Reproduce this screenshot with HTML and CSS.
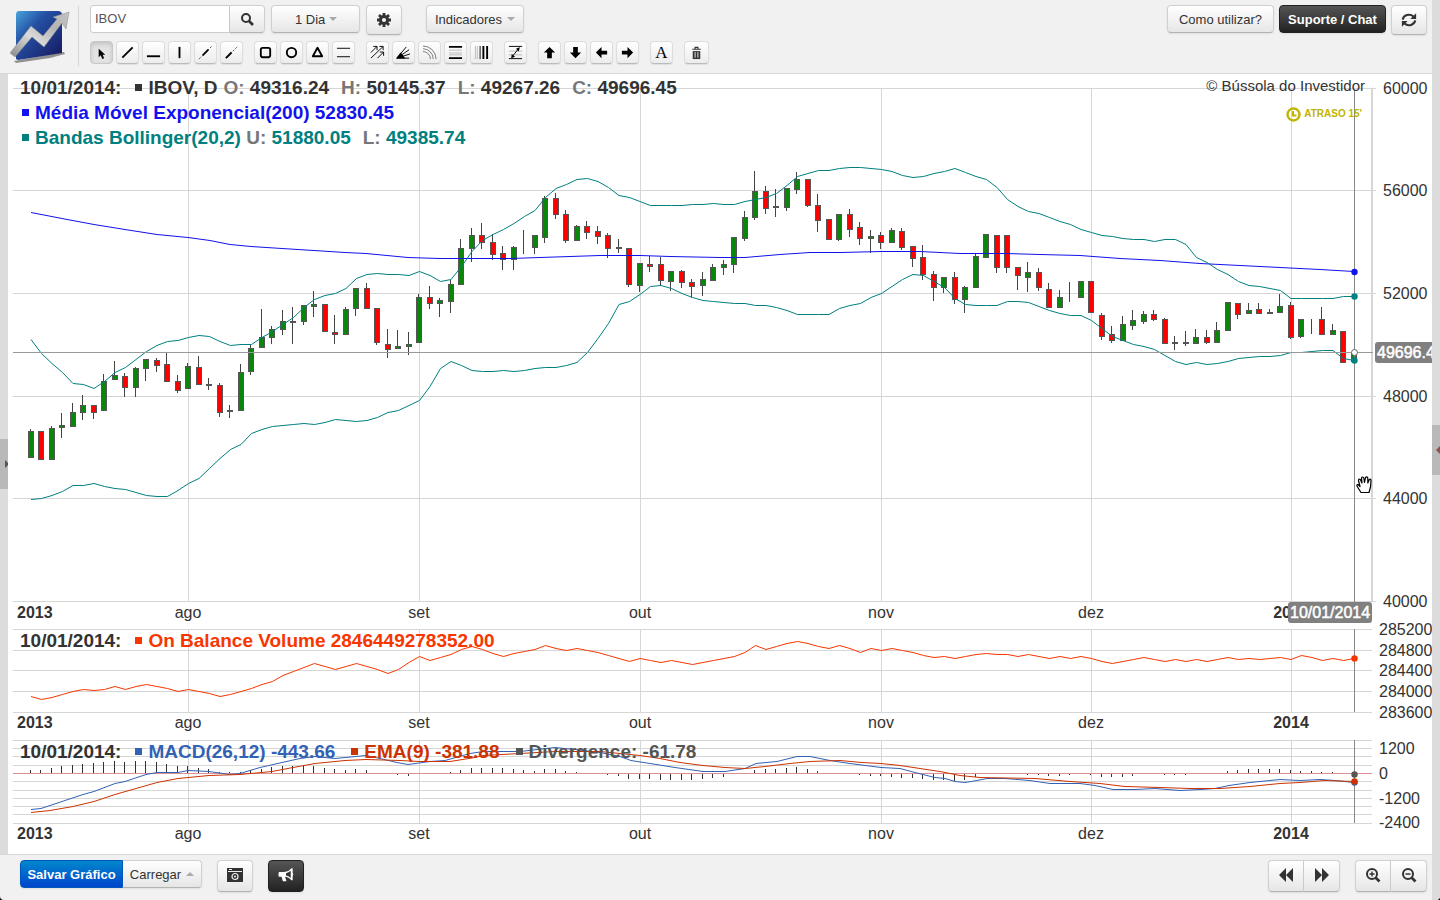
FILE: index.html
```html
<!DOCTYPE html>
<html lang="pt-BR">
<head>
  <meta charset="UTF-8">
  <meta name="viewport" content="width=device-width, initial-scale=1.0">
  <title>IBOV - Bússola do Investidor</title>
  <link rel="stylesheet" href="styles.css">
</head>
<body>
  <div class="main">
    <header class="topbar">
      <a href="#" class="logo" aria-label="Bússola do Investidor">
        <svg width="60" height="54" viewBox="0 0 60 54">
          <defs>
            <linearGradient id="logoBlue" x1="0" y1="0" x2="1" y2="1">
              <stop offset="0" stop-color="#4aa3dc"/>
              <stop offset="0.35" stop-color="#2450a4"/>
              <stop offset="1" stop-color="#16165c"/>
            </linearGradient>
            <linearGradient id="logoGrey" x1="0" y1="1" x2="1" y2="0">
              <stop offset="0" stop-color="#888"/>
              <stop offset="0.4" stop-color="#dadada"/>
              <stop offset="0.7" stop-color="#b4b4b4"/>
              <stop offset="1" stop-color="#c4c4c4"/>
            </linearGradient>
          </defs>
          <path d="M4 52 54 43 55 45 40 49 6 54z" fill="#777" opacity=".8"/>
          <path d="M9 2h39q4 0 4 4v38L8 51 6 50V6q0-4 3-4z" fill="url(#logoBlue)"/>
          <path d="M0 44 21 17 33 27 47 10 43 8 59 3 56 20 52 14 34 38 22 28 5 48z" fill="url(#logoGrey)" stroke="#8a8a8a" stroke-width=".5"/>
        </svg>
      </a>
      <div class="controls">
        <div class="row">
          <div class="search">
            <input type="text" value="IBOV" aria-label="Ativo">
            <button class="btn" aria-label="Buscar">
              <svg width="14" height="14" viewBox="0 0 14 14"><circle cx="6" cy="6" r="4" fill="none" stroke="#333" stroke-width="2"/><path d="M9 9l4 4" stroke="#333" stroke-width="2.6"/></svg>
            </button>
          </div>
          <div class="period">
            <select class="btn" aria-label="Período"><option>1 Dia</option></select>
            <i class="caret"></i>
          </div>
          <button class="btn tall" aria-label="Configurar">
            <svg width="14" height="14" viewBox="0 0 14 14"><circle cx="7" cy="7" r="3.6" fill="none" stroke="#333" stroke-width="3"/><path d="M7 0v3M7 11v3M0 7h3M11 7h3M2 2l2 2M10 10l2 2M12 2l-2 2M4 10l-2 2" stroke="#333" stroke-width="2.8"/></svg>
          </button>
          <button class="btn indicators">Indicadores <i class="caret"></i></button>
        </div>
        <div class="row tools">
          <div class="group">
            <button class="tool active" aria-label="Selecionar"><svg viewBox="0 0 16 16"><path d="M5 4v9l2.200-2 1.600 4 2-1-1.600-3.600H12z"/></svg></button>
            <button class="tool" aria-label="Linha"><svg viewBox="0 0 16 16"><path d="M2.500 13.500 13.500 2.500" class="s2"/></svg></button>
            <button class="tool" aria-label="Linha horizontal"><svg viewBox="0 0 16 16"><path d="M1 12h14" class="s2"/></svg></button>
            <button class="tool" aria-label="Linha vertical"><svg viewBox="0 0 16 16"><path d="M8 2v12" class="s2"/></svg></button>
            <button class="tool" aria-label="Reta estendida"><svg viewBox="0 0 16 16"><path d="M5 11l6-6" class="s2"/><path d="M1 15l4-4M11 5l4-4" class="s1 dots"/></svg></button>
            <button class="tool" aria-label="Semirreta"><svg viewBox="0 0 16 16"><path d="M2 14l6-6" class="s2"/><path d="M8 8l6-6" class="s1 dots"/></svg></button>
          </div>
          <div class="group">
            <button class="tool" aria-label="Retângulo"><svg viewBox="0 0 16 16"><rect x="3" y="3" width="10" height="10" rx="2" class="s2"/></svg></button>
            <button class="tool" aria-label="Círculo"><svg viewBox="0 0 16 16"><circle cx="8" cy="8" r="5" class="s2"/></svg></button>
            <button class="tool" aria-label="Triângulo"><svg viewBox="0 0 16 16"><path d="M8 3 13 12H3z" class="s2" stroke-linejoin="round"/></svg></button>
            <button class="tool" aria-label="Canal"><svg viewBox="0 0 16 16"><path d="M1 3.500h14M1 12.500h14" class="s1"/></svg></button>
          </div>
          <div class="group">
            <button class="tool" aria-label="Canal de tendência"><svg viewBox="0 0 16 16"><path d="M1 8l6-6M3.500 1.500h4v4M1 14 14 1.500M10 1.500h4v4M8 14l6-6M10.500 7.500h4v4" class="s1"/></svg></button>
            <button class="tool" aria-label="Leque"><svg viewBox="0 0 16 16"><path d="M1 14 11 2M1 14 14 5M1 14 15 9.500M1 14h13" class="s1"/><path d="M0 14.500 5 8l5 6.500z"/></svg></button>
            <button class="tool" aria-label="Arcos"><svg viewBox="0 0 16 16"><path d="M1 1a14 14 0 0 1 14 14M1 4a11 11 0 0 1 11 11M1 7a8 8 0 0 1 8 8" class="s1 grey"/></svg></button>
            <button class="tool" aria-label="Fibonacci"><svg viewBox="0 0 16 16"><path d="M1 2h14M1 14h14" class="s2"/><path d="M1 5.500h14M1 8.500h14M1 10.500h14" class="s1 light"/></svg></button>
            <button class="tool" aria-label="Zonas de tempo"><svg viewBox="0 0 16 16"><path d="M1.500 1v14M3.500 1v14" class="s1 light"/><path d="M6.500 1v14" class="s1"/><path d="M10 1v14M14 1v14" class="s2"/></svg></button>
          </div>
          <div class="group">
            <button class="tool" aria-label="Projeção"><svg viewBox="0 0 16 16"><path d="M1 1.500h14M1 14.500h14" class="s1"/><path d="M1 6.500h14M1 10.500h14" class="s1 light"/><path d="M4 13 12 3" class="s1"/><path d="M8.500 4 12.500 2.500l-1 4.500zM4 9.500l-.5 4.500 4-1.500z"/></svg></button>
          </div>
          <div class="group">
            <button class="tool" aria-label="Seta para cima"><svg viewBox="0 0 16 16"><path d="M8 2l6 6h-3.500v6h-5V8H2z"/></svg></button>
            <button class="tool" aria-label="Seta para baixo"><svg viewBox="0 0 16 16"><path d="M8 14l6-6h-3.500V2h-5v6H2z"/></svg></button>
            <button class="tool" aria-label="Seta para esquerda"><svg viewBox="0 0 16 16"><path d="M2 8l6-6v4h6v4H8v4z"/></svg></button>
            <button class="tool" aria-label="Seta para direita"><svg viewBox="0 0 16 16"><path d="M14 8 8 2v4H2v4h6v4z"/></svg></button>
          </div>
          <div class="group">
            <button class="tool letter">A</button>
          </div>
          <div class="group">
            <button class="tool trash" aria-label="Apagar"><svg viewBox="0 0 16 16"><path d="M6.500 4V2.500h3V4M3.500 4.500h9" fill="none" stroke="#333" stroke-width="1.200"/><path d="M4 6.500h8V15H4z" fill="#333"/><path d="M6.500 7.500v6M9.500 7.500v6" stroke="#eee"/></svg></button>
          </div>
        </div>
      </div>
      <div class="row help">
        <button class="btn wide">Como utilizar?</button>
        <button class="btn wide dark">Suporte / Chat</button>
        <button class="btn tall" aria-label="Atualizar">
          <svg width="18" height="16" viewBox="0 0 18 16"><path d="M2 7.500a7 6 0 0 1 12-3.500M16 8.500A7 6 0 0 1 4 12" fill="none" stroke="#333" stroke-width="2.400"/><path d="M17 .5v6.500h-6.500zM1 15.500V9h6.500z" fill="#333"/></svg>
        </button>
      </div>
    </header>

    <div class="work">
      <div class="strip"><button class="handle" aria-label="Abrir painel"><i class="right"></i></button></div>
      <main class="charts">
        <section class="pane">
          <svg class="plot" id="price" viewBox="8 74 1424 550"></svg>
          <div class="legend">
            <div class="line">
              <span class="date">10/01/2014:</span><i class="dot"></i><span>IBOV, D</span>
              <span><em>O:</em> 49316.24</span><span class="next"><em>H:</em> 50145.37</span><span class="next"><em>L:</em> 49267.26</span><span class="next"><em>C:</em> 49696.45</span>
            </div>
            <div class="line blue"><i class="dot"></i><span>Média Móvel Exponencial(200) 52830.45</span></div>
            <div class="line teal"><i class="dot"></i><span>Bandas Bollinger(20,2) <em>U:</em> 51880.05</span><span class="next"><em>L:</em> 49385.74</span></div>
          </div>
          <div class="credits">
            <p>© Bússola do Investidor</p>
            <p class="delay"><svg width="15" height="15" viewBox="0 0 15 15"><circle cx="7.500" cy="7.500" r="6" fill="none" stroke="#c1b400" stroke-width="2.400"/><path d="M7 4v4.500h3.500" fill="none" stroke="#c1b400" stroke-width="2"/></svg>ATRASO 15'</p>
          </div>
          <svg class="hand" width="18" height="20" viewBox="0 0 18 20"><path d="M5 17.500 1.500 12Q0 9.500 2 9.500l2 2L2.500 5.500Q2.500 3.500 4.300 4.500L6 8 5.500 3Q6.500 1 7.800 3L8.500 7.500 9.500 2.500Q11 1 11.800 3V8L13.300 4.500Q15 3.500 15 5.500L14.500 12 13 17.500z" fill="#fff" stroke="#000" stroke-width="1.200" stroke-linejoin="round"/></svg>
        </section>
        <section class="pane">
          <svg class="plot" id="obv" viewBox="8 624 1424 111"></svg>
          <div class="legend low">
            <div class="line"><span class="date">10/01/2014:</span><span class="item orange"><i class="dot"></i>On Balance Volume 2846449278352.00</span></div>
          </div>
        </section>
        <section class="pane">
          <svg class="plot" id="macd" viewBox="8 735 1424 119"></svg>
          <div class="legend low">
            <div class="line"><span class="date">10/01/2014:</span><span class="item steel"><i class="dot"></i>MACD(26,12) -443.66</span><span class="item next red"><i class="dot"></i>EMA(9) -381.88</span><span class="item next grey"><i class="dot"></i>Divergence: -61.78</span></div>
          </div>
        </section>
      </main>
    </div>

    <footer class="bottombar">
      <div class="joined">
        <button class="btn primary">Salvar Gráfico</button>
        <button class="btn load">Carregar <i class="caret up"></i></button>
      </div>
      <button class="btn big camera" aria-label="Imagem">
        <svg width="16" height="14" viewBox="0 0 16 14"><path d="M0 0h16v14H0z" fill="#333"/><path d="M1 3.500h14M2 1.500h3" stroke="#eee"/><circle cx="8" cy="8.500" r="3" fill="none" stroke="#eee" stroke-width="1.200"/><circle cx="8" cy="8.500" r="1" fill="#eee"/></svg>
      </button>
      <button class="btn big dark" aria-label="Anunciar">
        <svg width="18" height="16" viewBox="0 0 18 16"><path d="M1 4.500h6q5 0 8-4h1.500V6q1.500 1 0 3v5H15q-3-4-7-4l1.500 5H5.500L4 10H1q-1-2.500 0-5.500z" fill="#fff"/><path d="M9 6Q12 5.500 14.300 3.300v8Q12 9 9 8.700z" fill="#333"/></svg>
      </button>
      <div class="joined nav">
        <button class="btn big" aria-label="Voltar"><svg width="16" height="14" viewBox="0 0 16 14"><path d="M8 0v14L1 7zM15 0v14L8 7z" fill="#333"/></svg></button>
        <button class="btn big" aria-label="Avançar"><svg width="16" height="14" viewBox="0 0 16 14"><path d="M1 0v14l7-7zM8 0v14l7-7z" fill="#333"/></svg></button>
      </div>
      <div class="joined">
        <button class="btn big" aria-label="Aproximar"><svg width="16" height="16" viewBox="0 0 16 16"><circle cx="7" cy="7" r="5" fill="none" stroke="#333" stroke-width="2"/><path d="M10.500 10.500l4 4" stroke="#333" stroke-width="2.600"/><path d="M4.500 7h5M7 4.500v5" stroke="#333" stroke-width="1.400"/></svg></button>
        <button class="btn big" aria-label="Afastar"><svg width="16" height="16" viewBox="0 0 16 16"><circle cx="7" cy="7" r="5" fill="none" stroke="#333" stroke-width="2"/><path d="M10.500 10.500l4 4" stroke="#333" stroke-width="2.600"/><path d="M4.500 7h5" stroke="#333" stroke-width="1.400"/></svg></button>
      </div>
    </footer>
  </div>
  <div class="strip"><button class="handle" aria-label="Abrir painel"><i class="left"></i></button></div>

  <script src="chart.js"></script>
</body>
</html>
```

FILE: styles.css
```css
* {
  box-sizing: border-box;
}
html {
  background: #000;
}
body {
  margin: 0;
  display: flex;
  min-height: 100vh;
  font-family: "Liberation Sans", Arial, sans-serif;
  font-size: 13px;
  color: #333;
  background: #f1f1f1;
  border-radius: 0 0 4px 4px;
  overflow: hidden;
}
button, input, select {
  font: inherit;
  color: inherit;
  margin: 0;
}
.main {
  flex: 1;
  min-width: 0;
  display: flex;
  flex-direction: column;
}

/* Top toolbar */
.topbar {
  display: flex;
  height: 74px;
  border-bottom: 1px solid #d9d9d9;
}
.logo {
  width: 79px;
  height: 60px;
  margin: 6px 11px 0 0;
  padding: 3px 0 0 10px;
  border-right: 1px solid #d5d5d5;
}
.logo svg {
  display: block;
}
.controls {
  flex: 1;
}
.row {
  display: flex;
  align-items: flex-start;
}
.controls .row:first-child {
  height: 36px;
  padding-top: 5px;
  gap: 6px;
}
.btn {
  display: inline-flex;
  align-items: center;
  justify-content: center;
  height: 28px;
  padding: 0 9px;
  border: 1px solid #d0d0d0;
  border-bottom-color: #b3b3b3;
  border-radius: 4px;
  background: linear-gradient(#fff, #e6e6e6);
  box-shadow: 0 1px 2px rgba(0,0,0,0.08);
  white-space: nowrap;
  cursor: pointer;
}
.btn:hover {
  background: #e6e6e6;
}
.btn.wide {
  width: 107px;
  padding: 0;
}
.btn.tall {
  width: 36px;
  height: 30px;
}
.btn.dark {
  color: #fff;
  font-weight: bold;
  border-color: #222;
  background: linear-gradient(#555, #222);
}
.btn.primary {
  color: #fff;
  font-weight: bold;
  border-color: #05b;
  background: linear-gradient(#08c, #04c);
}
.caret {
  border: 4px solid transparent;
  border-top-color: #aaa;
  border-bottom: 0;
  margin-left: 5px;
}
.caret.up {
  border-bottom: 4px solid #aaa;
  border-top: 0;
}
.search {
  display: flex;
}
.search input {
  width: 140px;
  height: 28px;
  padding: 0 4px 2px;
  border: 1px solid #ccc;
  border-radius: 3px 0 0 3px;
  background: #fff;
  color: #555;
}
.search .btn {
  width: 35px;
  border-left: 0;
  border-radius: 0 4px 4px 0;
}
.period {
  position: relative;
  width: 89px;
}
.period select {
  appearance: none;
  width: 100%;
  padding: 0 23px;
}
.period .caret {
  position: absolute;
  right: 23px;
  top: 12px;
  pointer-events: none;
}
.indicators {
  width: 98px;
  margin-left: 18px;
}
.help {
  gap: 5px;
  padding: 5px 5px 0 0;
}

/* Drawing tools */
.tools {
  padding-top: 5px;
  gap: 11px;
}
.group {
  display: flex;
  gap: 3px;
}
.tool {
  display: flex;
  align-items: center;
  justify-content: center;
  width: 23px;
  height: 23px;
  padding: 0;
  border: 1px solid #ddd;
  border-bottom-color: #bbb;
  border-radius: 4px;
  background: linear-gradient(#fff, #ececec);
  box-shadow: 0 1px 1px rgba(0,0,0,0.08);
}
.tool svg {
  width: 15px;
  height: 15px;
}
.tool.active {
  background: #e3e3e3;
  border-color: #c8c8c8;
  box-shadow: inset 0 2px 4px rgba(0,0,0,0.15);
}
.tool.letter {
  font-family: "Liberation Serif", serif;
  font-size: 17px;
  color: #000;
}
.tool.trash {
  width: 25px;
}
.s1, .s2 {
  fill: none;
  stroke: #000;
  stroke-width: 1;
}
.s2 {
  stroke-width: 2;
}
.s1.grey { stroke: #777; }
.s1.light { stroke: #bbb; }
.dots { stroke-dasharray: 1 1.5; }

/* Side strips */
.strip {
  width: 8px;
  display: flex;
  align-items: center;
  background: #dcdcdc;
}
.handle {
  width: 8px;
  height: 50px;
  padding: 0;
  border: 0;
  background: #b9b9b9;
  overflow: hidden;
}
.handle i {
  display: block;
  width: 0;
  border: 4px solid transparent;
}
.handle .right {
  border-left-color: #555;
  margin-left: 5px;
}
.handle .left {
  border-right-color: #855;
}

/* Charts */
.work {
  flex: 1;
  display: flex;
  background: #fff;
}
.charts {
  flex: 1;
  min-width: 0;
  overflow: hidden;
}
.pane {
  position: relative;
}
.plot {
  display: block;
  width: 100%;
  height: auto;
  overflow: visible;
}
.plot text {
  font-size: 16px;
  fill: #333;
}
.plot .bold {
  font-weight: bold;
}
.plot .tag {
  fill: #fff;
  stroke: #fff;
  stroke-width: 0.5;
}
.legend {
  position: absolute;
  left: 12px;
  top: 1px;
  font-size: 19px;
  font-weight: bold;
  line-height: 25px;
  white-space: nowrap;
}
.legend.low {
  top: 4px;
}
.line {
  display: flex;
  align-items: center;
  gap: 6px;
}
.line > .dot:first-child {
  margin-left: 2px;
}
.legend em {
  font-style: normal;
  color: #777;
}
.date {
  margin-right: 8px;
}
.item {
  display: flex;
  align-items: center;
  gap: 6px;
}
.next {
  margin-left: 6px;
}
.item.next {
  margin-left: 10px;
}
.dot {
  width: 7px;
  height: 7px;
  background: currentColor;
}
.blue { color: #1212ee; }
.teal { color: #008080; }
.orange { color: #f83600; }
.steel { color: #3162b4; }
.red { color: #cc3300; }
.grey { color: #555; }
.credits {
  position: absolute;
  right: 67px;
  top: 2px;
  text-align: right;
  font-size: 15px;
}
.credits p {
  margin: 0;
  line-height: 20px;
}
.credits .delay {
  display: flex;
  align-items: center;
  justify-content: flex-end;
  gap: 3px;
  margin: 8px 3px 0 0;
  font-size: 10px;
  font-weight: bold;
  color: #c1b400;
}
.hand {
  position: absolute;
  right: 58px;
  top: 401px;
}

/* Bottom toolbar */
.bottombar {
  display: flex;
  align-items: flex-start;
  height: 46px;
  padding: 5px 5px 0 20px;
  border-top: 1px solid #d9d9d9;
}
.joined {
  display: flex;
}
.joined .btn:first-child {
  border-radius: 4px 0 0 4px;
}
.joined .btn:last-child {
  border-left: 0;
  border-radius: 0 4px 4px 0;
}
.primary {
  width: 103px;
}
.load {
  width: 79px;
}
.btn.big {
  width: 36px;
  height: 32px;
  padding-bottom: 3px;
}
.camera {
  margin: 0 15px;
}
.nav {
  margin: 0 15px 0 auto;
}
```

FILE: chart.js
```js
const STEP = 10.5;
const FIRST = 31;
const GRID = '#d6d6d6';
const months = [[188, 'ago'], [419, 'set'], [640, 'out'], [881, 'nov'], [1091, 'dez'], [1291, '2014']];

// colour, body top, body bottom, high, low
const candles = `g431,457,429,457 r431,459,431,459 g428,459,426,459 g425,427,413,437 g412,426,403,426 g405,412,395,419 r405,412,405,418
g381,410,374,410 g375,379,361,379 r376,387,373,396 g368,387,367,396 g359,368,359,380 r360,365,358,371 r364,381,353,381 r381,390,375,392
g366,388,363,388 r367,384,356,384 r384,385,378,389 r385,412,383,416 g410,411,405,417 g372,410,364,410 g348,371,344,374 g337,347,309,347
g329,337,326,343 g321,329,310,334 g321,322,307,343 g305,321,305,324 g304,306,291,316 r304,331,304,331 r332,334,315,343 g309,334,307,334
g288,308,288,315 r288,308,283,308 r308,342,308,344 r344,349,329,357 g346,348,330,348 g344,346,332,354 g297,342,294,342 r297,303,286,308
g300,303,298,316 g284,301,280,312 g248,284,239,284 g235,248,228,261 r235,242,223,248 r242,254,234,259 r253,259,246,269 g247,259,246,269
g246,246,230,253 g235,247,235,253 g198,237,196,242 r198,214,193,218 r214,240,210,242 g226,240,225,240 r226,232,221,238 r231,236,226,243
r235,248,233,257 g247,248,239,252 r248,284,248,286 g263,285,263,291 r264,266,256,271 r264,280,257,285 g271,281,271,290 r271,282,270,287
r282,286,279,297 g279,285,272,295 g267,280,264,280 g264,267,260,274 g237,264,237,272 g217,238,211,240 g191,217,171,219 r191,208,186,213
g206,207,189,216 g188,207,188,210 g179,189,172,193 r179,205,179,206 r205,220,194,231 r219,239,219,239 g214,239,214,240 r214,229,209,236
r227,238,222,244 g236,238,230,252 r235,242,232,248 g230,242,228,242 r231,247,228,249 r246,258,246,266 r257,274,245,279 r274,287,271,300
g277,287,277,292 r277,299,272,303 g287,299,286,312 g256,287,253,287 g234,257,234,257 r235,267,235,272 r235,267,235,272 r267,275,267,289
g272,277,262,291 r272,287,268,290 r289,307,283,307 g297,307,290,307 g297,297,282,301 g281,297,281,297 r281,312,281,312 r315,336,313,339
r334,340,326,342 g324,340,316,340 g320,325,310,329 g314,321,311,323 r314,319,310,320 r319,343,318,343 g342,343,336,349 r342,343,331,345
g337,343,329,343 r337,342,330,343 g330,342,322,342 g302,330,302,330 r303,314,303,318 g310,313,303,313 r309,313,303,313 g312,313,309,313
g306,312,294,312 r305,337,302,338 g319,336,319,337 g319,319,319,333 r319,334,307,334 g330,334,324,334 r331,362,331,362 g352,361,352,361`;

const upper = `339 353 363 372 383 384 388 381 372 367 359 351 345 341 340 337 335 336 341 345 344 344 337 331 324 317 307 299 295 293 288
278 274 273 274 274 275 271 275 281 279 266 251 240 234 229 223 216 210 197 188 184 179 178 181 187 195 197 201 205 205 205 205 204 204
203 204 204 201 199 197 193 185 176 173 170 170 168 167 167 168 169 171 175 177 176 173 171 168 172 176 179 187 199 206 211 213 217 221
224 229 232 235 236 238 239 239 241 239 239 244 257 262 269 274 281 285 286 288 290 298 298 298 298 298 296 296`;

const lower = `499 498 495 491 485 485 483 486 488 489 492 495 496 496 490 483 478 468 458 449 444 433 429 426 425 424 423 424 422 419 420
421 420 417 412 410 405 400 386 368 361 365 370 371 371 370 371 370 368 367 367 365 362 352 338 323 304 301 294 286 285 288 293 297 300
301 302 303 303 305 305 307 310 314 314 314 314 308 305 303 297 293 286 279 274 275 281 287 298 304 305 305 305 301 301 302 306 310 313
315 315 320 328 336 340 344 346 349 355 361 364 362 364 363 361 358 357 356 356 355 352 352 351 350 350 358 360`;

const obv = `696 699 697 694 691 689 690 689 686 689 686 684 686 688 691 689 691 693 696 694 691 688 684 681 675 671 667 663 666 669 666
663 666 669 673 669 662 656 660 657 654 649 646 649 653 656 653 651 649 645 648 650 648 650 652 655 658 661 658 660 662 660 662 664 662
660 658 656 652 645 649 646 643 641 643 646 648 645 648 652 648 650 648 650 652 655 657 656 658 656 654 653 654 654 656 654 656 658 656
658 656 658 661 663 661 659 657 659 661 659 661 659 661 659 657 659 658 659 658 657 659 655 657 660 658 660 658`;

const divergence = `3 3 5 7 8 9 10 11 12 11 12 12 11 9 7 7 5 4 1 1 1 3 4 6 7 7 8 7 5 4 3 4 3 0 -1 -2 -3 0 0 0 1 3 5 5 5 5 4 3 2 4 4 2 1 0 -1
-2 -3 -6 -6 -6 -7 -7 -7 -7 -6 -5 -4 -1 0 3 4 4 5 6 4 2 0 0 -1 -2 -3 -3 -4 -5 -5 -6 -7 -7 -8 -7 -4 -1 -1 -1 -1 -2 -2 -3 -3 -2 -1 -2 -4
-4 -4 -3 -1 -1 -2 -2 -2 -1 0 0 2 3 4 4 4 4 3 2 2 1 1 0 -1`;

const average = `31,212 62,218 94,224 125,229 157,234 188,237 210,240 230,244 251,246 282,248 314,250 345,252 366,253 387,255 408,257 440,258
480,258 510,258 540,257 570,256 600,255 640,255 670,256 720,257 745,257 780,254 810,252 840,252 882,251 920,251 960,253 1005,253 1040,254
1080,255 1120,258 1160,260 1200,263 1240,265 1280,267 1320,269 1354,271`;

const macd = `31,809 41,808 62,801 83,794 94,791 115,783 125,781 146,774 157,772 178,772 188,770 209,771 230,774 240,773 260,767 282,762
300,758 315,756 335,758 366,755 380,758 397,762 408,764 430,761 445,760 470,753 483,751 520,751 555,747 575,749 600,752 620,756 631,760
650,763 675,767 703,771 725,771 745,768 756,763 777,761 797,756 810,756 830,760 850,763 881,767 900,768 915,772 935,777 945,778 955,781
965,782 977,780 987,778 1005,778 1030,780 1050,783 1080,783 1095,785 1113,789 1135,789 1155,788 1180,790 1200,789 1215,788 1229,785
1250,782 1280,779 1300,780 1320,779 1335,780 1354,782`;

const ema = `31,812 50,810 73,806 94,801 115,794 136,788 157,782 178,778 209,775 240,774 272,771 293,767 315,763 345,760 366,759 400,760
420,761 450,761 475,757 483,755 520,753 555,751 600,751 620,753 640,755 660,758 680,762 703,765 725,767 745,768 765,766 790,763 810,761
840,760 862,762 881,763 900,765 920,768 940,771 960,775 980,777 1035,778 1070,781 1100,783 1125,786 1160,787 1190,788 1220,788 1250,786
1280,783 1300,782 1325,780 1354,781`;

const values = text => text.trim().split(/\s+/);
const posX = i => FIRST + i * STEP;

function line(x1, y1, x2, y2, color, width = 1) {
  return `<path d="M${x1} ${y1}L${x2} ${y2}" stroke="${color}" stroke-width="${width}"/>`;
}

function curve(points, color) {
  return `<polyline points="${points}" transform="translate(0 .5)" fill="none" stroke="${color}"/>`;
}

function series(text, color) {
  return curve(values(text).map((y, i) => posX(i) + ',' + y).join(' '), color);
}

function label(x, y, text, attrs = '') {
  return `<text x="${x}" y="${y}" ${attrs}>${text}</text>`;
}

function dot(y, color) {
  return `<circle cx="1354.5" cy="${y}" r="3.2" fill="${color}"/>`;
}

// Horizontal and vertical grid plus the month labels under it
function grid(rows, right, baseline) {
  const top = rows[0];
  const bottom = rows[rows.length - 1];
  let out = rows.map(y => line(13, y + 0.5, right, y + 0.5, GRID)).join('');
  out += label(17, baseline, '2013', 'class="bold"');
  months.forEach(([x, name]) => {
    out += line(x + 0.5, top, x + 0.5, bottom, GRID);
    out += label(x, baseline, name, 'text-anchor="middle"' + (name === '2014' ? ' class="bold"' : ''));
  });
  return out;
}

function drawPrice() {
  const rows = [88, 190, 293, 396, 498, 601];
  let out = grid(rows, 1376, 618) + line(1372, 88, 1372, 601, GRID, 2);
  rows.forEach((y, i) => { out += label(1383, y + 6, 60000 - i * 4000); });
  values(candles).forEach((c, i) => {
    const [top, bottom, high, low] = c.slice(1).split(',').map(Number);
    const x = Math.floor(posX(i));
    out += line(x - 0.5, high, x - 0.5, low + 1, '#444');
    out += `<rect x="${x - 2.5}" y="${top + 0.5}" width="5" height="${bottom - top}" fill="${c[0] === 'g' ? '#0a870a' : '#f00'}" stroke="#555"/>`;
  });
  out += curve(average, '#1212ee') + series(upper, '#008080') + series(lower, '#008080');
  out += line(13, 352.5, 1373, 352.5, '#999') + line(1354.5, 90, 1354.5, 606, '#888');
  out += dot(272, '#1212ee') + dot(296.5, '#008080') + dot(360.5, '#008080');
  out += '<circle cx="1354.5" cy="352.5" r="3" fill="#fff" stroke="#666"/>';
  out += '<rect x="1375" y="342" width="62" height="21" rx="3" fill="#808080"/>' + label(1377, 358, '49696.45', 'class="tag"');
  out += '<rect x="1288" y="602" width="84" height="21" rx="3" fill="#808080"/>' + label(1290, 618, '10/01/2014', 'class="tag"');
  document.getElementById('price').innerHTML = out;
}

function drawObv() {
  const rows = [629, 650, 670, 691, 712];
  let out = grid(rows, 1372, 728);
  rows.forEach((y, i) => { out += label(1379, y + 6, 285200 - i * 400); });
  out += series(obv, '#f83600') + line(1354.5, 629, 1354.5, 712, '#888') + dot(658.5, '#f83600');
  document.getElementById('obv').innerHTML = out;
}

function drawMacd() {
  let out = grid([740, 748, 756, 765, 773, 781, 790, 798, 806, 814, 823], 1372, 839);
  [[748, '1200'], [773, '0'], [798, '-1200'], [822, '-2400']].forEach(([y, t]) => { out += label(1379, y + 6, t); });
  values(divergence).forEach((h, i) => {
    if (h !== '0') out += line(Math.floor(posX(i)) - 0.5, 773, Math.floor(posX(i)) - 0.5, 773 - h, '#333');
  });
  out += line(13, 773.5, 1372, 773.5, '#dd8f93');
  out += curve(macd, '#3162b4') + curve(ema, '#cc3300') + line(1354.5, 740, 1354.5, 823, '#888');
  out += dot(774.5, '#555') + dot(782.5, '#3162b4') + dot(781.5, '#cc3300');
  document.getElementById('macd').innerHTML = out;
}

drawPrice();
drawObv();
drawMacd();
```
